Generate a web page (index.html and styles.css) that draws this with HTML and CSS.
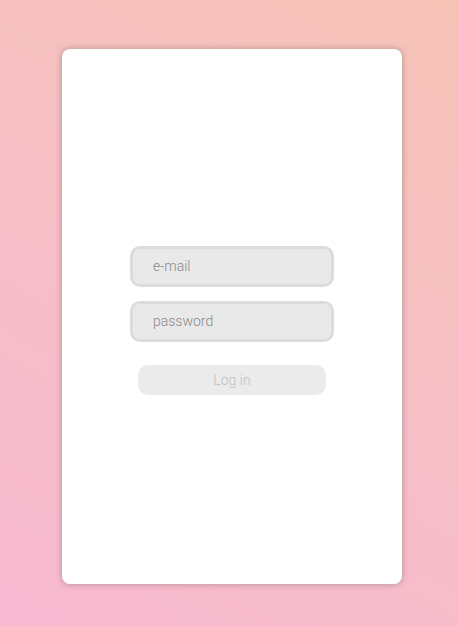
FILE: index.html
```html
<!DOCTYPE html>
<html>
<head>
<meta charset="utf-8">
<link rel="stylesheet" href="styles.css">
</head>
<body>
<div class="page">
  <div class="card">
    <form class="form">
      <input class="field" type="text" placeholder="e-mail">
      <input class="field" type="password" placeholder="password">
      <button class="btn" type="button">Log in</button>
    </form>
  </div>
</div>
</body>
</html>
```
FILE: styles.css
```css
html, body {
  margin: 0;
  padding: 0;
  height: 100%;
}
body {
  background: linear-gradient(30deg, #f8b9d1 0%, #f6bfc6 50%, #f7c3b6 100%);
  font-family: Roboto, "Noto Sans", sans-serif;
}
.page {
  height: 626px;
  box-sizing: border-box;
  padding: 49px 56px 42px 62px;
  display: flex;
}
.card {
  width: 340px;
  height: 535px;
  background: #fff;
  border-radius: 8px;
  box-shadow: 0 0 6px rgba(120, 100, 100, 0.55);
  display: flex;
  flex-direction: column;
  align-items: center;
  justify-content: flex-start;
  padding-top: 197px;
  box-sizing: border-box;
}
.form {
  display: flex;
  flex-direction: column;
  align-items: center;
  margin: 0;
}
.field {
  width: 204px;
  height: 41px;
  box-sizing: border-box;
  border: 3px solid #dcdcdc;
  border-radius: 10px;
  background: #e9e9e9;
  padding: 0 0 1px 20px;
  font-family: Roboto, sans-serif;
  font-weight: 300;
  font-size: 14px;
  color: #888;
  outline: none;
  margin: 0 0 14px 0;
}
.field::placeholder {
  color: #8a8a8a;
}
.btn {
  width: 188px;
  height: 30px;
  margin-top: 9px;
  border: none;
  border-radius: 10px;
  background: #ebebeb;
  color: #bfc2c2;
  font-family: Roboto, sans-serif;
  font-weight: 300;
  font-size: 14px;
  padding: 0 0 1px 0;
}
```
